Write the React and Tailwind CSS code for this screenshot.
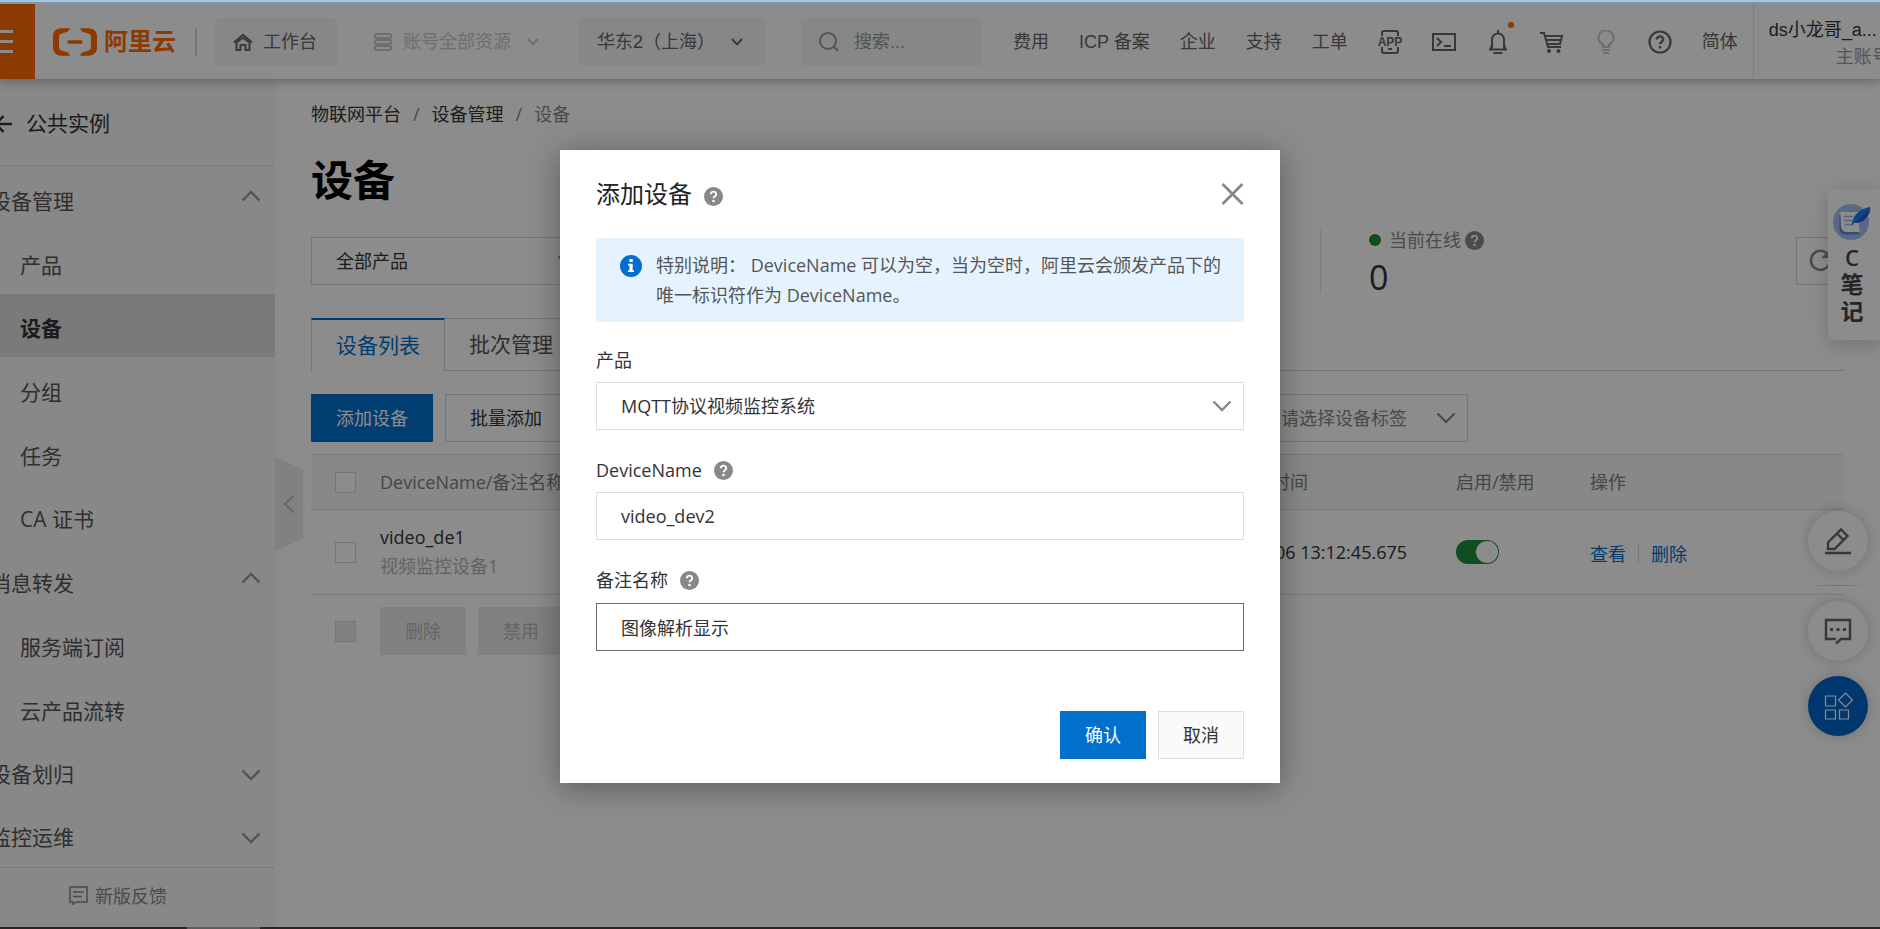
import { useState } from 'react'

const menu = [
    { label: '设备管理', group: true, open: true, size: 'h-16' },
    { label: '产品', size: 'h-16' },
    { label: '设备', active: true, size: 'h-[63px]' },
    { label: '分组', size: 'h-16' },
    { label: '任务', size: 'h-16' },
    { label: 'CA 证书', size: 'h-[63px]' },
    { label: '消息转发', group: true, open: true, size: 'h-16' },
    { label: '服务端订阅', size: 'h-16' },
    { label: '云产品流转', size: 'h-16' },
    { label: '设备划归', group: true, size: 'h-[63px]' },
    { label: '监控运维', group: true, size: 'h-[63px]' },
]

const navLinks = ['费用', 'ICP 备案', '企业', '支持', '工单']

const Chevron = ({ className = '', width = 2 }) => (
    <svg
        className={className}
        width="20"
        height="12"
        viewBox="0 0 20 12"
        fill="none"
        stroke="currentColor"
        strokeWidth={width}>
        <path d="M1.5 1.5 10 10l8.5-8.5" />
    </svg>
)

const SmallChevron = () => (
    <svg width="12" height="8" viewBox="0 0 12 8" fill="none" stroke="currentColor" strokeWidth="2">
        <path d="M1 1l5 5.4L11 1" />
    </svg>
)

const Help = () => (
    <svg width="19" height="19" viewBox="0 0 24 24" className="shrink-0">
        <circle cx="12" cy="12" r="12" fill="#888" />
        <path
            d="M8.6 9.2a3.4 3.4 0 0 1 6.8.2c0 2.2-3.4 2.4-3.4 4.9"
            fill="none"
            stroke="#fff"
            strokeWidth="2.4"
        />
        <circle cx="12" cy="17.8" r="1.6" fill="#fff" />
    </svg>
)

const Icon = ({ children, className = '' }) => (
    <svg
        width="24"
        height="24"
        viewBox="0 0 24 24"
        fill="none"
        stroke="currentColor"
        strokeWidth="2"
        className={className}>
        {children}
    </svg>
)

const Checkbox = ({ label, disabled }) => (
    <input
        type="checkbox"
        aria-label={label}
        disabled={disabled}
        className="block size-[21px] appearance-none border border-[#d5d5d5] bg-white disabled:bg-[#ebebeb]"
    />
)

function TopBar() {
    return (
        <header className="relative z-10 flex h-[75px] shrink-0 items-center bg-white font-['Liberation_Sans','Noto_Sans_CJK_SC',sans-serif] text-lg text-[#666] whitespace-nowrap shadow-[0_2px_10px_rgba(0,0,0,0.3)]">
            <button
                aria-label="菜单"
                className="flex h-full w-[35px] shrink-0 flex-col justify-center gap-[7px] bg-[#ff6a00]">
                <span className="h-[3px] w-[13px] bg-white" />
                <span className="h-[3px] w-[13px] bg-white" />
                <span className="h-[3px] w-[13px] bg-white" />
            </button>
            <a
                href="#home"
                className="ml-[18px] flex shrink-0 items-center gap-[7px] text-2xl font-bold text-[#ff6a00]">
                <svg width="44" height="28" viewBox="0 0 45 28" fill="currentColor">
                    <path d="M17.5 0H8.5C3.4 0 0 3.4 0 8v12c0 4.600 3.400 8 8.500 8h9l-2.100-3.300-6.900-2.100C7 22 6.200 20.900 6.200 19.600V8.400C6.200 7.100 7 6 8.500 5.500l6.900-2.200z" />
                    <path d="M27.500 0h9C41.600 0 45 3.400 45 8v12c0 4.600-3.400 8-8.500 8h-9l2.100-3.300 6.900-2.100c1.500-.6 2.300-1.700 2.300-3V8.400c0-1.300-.8-2.400-2.300-2.900l-6.900-2.200z" />
                    <path d="M15 12.200h15v3.600H15z" />
                </svg>
                阿里云
            </a>
            <span className="ml-[19px] h-7 w-0.5 shrink-0 bg-[#d8d8d8]" />
            <button className="ml-[18px] flex h-12 shrink-0 items-center gap-[10px] rounded-sm bg-[#f4f6f9] pr-5 pl-[18px]">
                <svg width="20" height="18" viewBox="0 0 20 18" fill="none" stroke="currentColor" strokeWidth="2">
                    <path d="M1 9.500 10 1.800l9 7.700" />
                    <path d="M3.500 9.500V17h4v-5h5v5h4V9.500L10 4.800z" />
                </svg>
                工作台
            </button>
            <button className="ml-[37px] flex shrink-0 items-center text-[#c6c9ce]">
                <svg width="18" height="18" viewBox="0 0 18 18" fill="none" stroke="currentColor" strokeWidth="2">
                    <rect x="1" y="1" width="16" height="4" rx="1.500" />
                    <rect x="1" y="7" width="16" height="4" rx="1.500" />
                    <rect x="1" y="13" width="16" height="4" rx="1.500" />
                </svg>
                <span className="mr-4 ml-[11px]">账号全部资源</span>
                <SmallChevron />
            </button>
            <button className="ml-10 flex h-12 w-[186px] shrink-0 items-center justify-between rounded-sm bg-[#f4f6f9] pr-[22px] pl-[18px]">
                华东2（上海）
                <SmallChevron />
            </button>
            <label className="ml-9 flex h-12 w-[180px] shrink-0 items-center gap-[15px] bg-[#f4f6f9] pl-[18px] text-[#999]">
                <svg width="20" height="20" viewBox="0 0 20 20" fill="none" stroke="currentColor" strokeWidth="2">
                    <circle cx="9" cy="9" r="8" />
                    <path d="m14 14 5 5" />
                </svg>
                <input
                    aria-label="搜索"
                    placeholder="搜索..."
                    className="w-24 bg-transparent outline-none placeholder:text-[#999]"
                />
            </label>
            <nav className="ml-8 flex shrink-0 items-center gap-[30px]">
                {navLinks.map(link => (
                    <a key={link} href="#nav">
                        {link}
                    </a>
                ))}
                <button aria-label="APP">
                    <svg width="24" height="24" viewBox="0 0 24 24" fill="none" stroke="currentColor" strokeWidth="2">
                        <path d="M4 6V3a2 2 0 0 1 2-2h12a2 2 0 0 1 2 2v3M4 17v4a2 2 0 0 0 2 2h12a2 2 0 0 0 2-2v-4M10 19h4" />
                        <text
                            x="12"
                            y="16"
                            textAnchor="middle"
                            fill="currentColor"
                            stroke="none"
                            fontSize="12"
                            fontWeight="700">
                            APP
                        </text>
                    </svg>
                </button>
                <button aria-label="终端">
                    <Icon>
                        <path d="M1 4h22v16H1zM5 8l4 4-4 4M12 16h7" />
                    </Icon>
                </button>
                <button aria-label="消息" className="relative">
                    <Icon>
                        <path d="M12 0v3M3 19.500h18M6 19V9.500a6 6 0 0 1 12 0V19M7.500 23h9M6 15l-1.500 4M18 15l1.500 4" />
                    </Icon>
                    <span className="absolute -top-2 -right-1 size-1.5 rounded-full bg-[#ff6a00]" />
                </button>
                <button aria-label="购物车">
                    <Icon>
                        <path d="M0 3h4l4 14h13M5 6h17l-2 8H7M6 10h15" />
                        <circle cx="9" cy="21" r="2" fill="currentColor" stroke="none" />
                        <circle cx="18.500" cy="21" r="2" fill="currentColor" stroke="none" />
                    </Icon>
                </button>
                <button aria-label="提示" className="text-[#c6c9ce]">
                    <Icon>
                        <path d="M9 17v-2.500a7.500 7.500 0 1 1 6 0V17zM8 20h8M9 23h6" />
                    </Icon>
                </button>
                <button aria-label="帮助">
                    <Icon>
                        <circle cx="12" cy="12" r="10.500" strokeWidth="2.200" />
                        <path d="M8.800 9.600a3.200 3.200 0 0 1 6.400 0c0 2-3.200 2.400-3.200 4.600M12 16v2.400" strokeWidth="2.400" />
                    </Icon>
                </button>
                <a href="#lang">简体</a>
            </nav>
            <div className="ml-[15px] flex h-full w-[137px] shrink-0 flex-col justify-center border-l border-[#e2e2e2] pt-1 pl-[15px] leading-[27px]">
                <span className="text-[#333]">ds小龙哥_a...</span>
                <span className="text-right text-[#999]">主账号</span>
            </div>
        </header>
    )
}

function Sidebar() {
    return (
        <aside className="relative flex w-[275px] shrink-0 flex-col bg-[#f7f7f7] text-[21px] text-[#555]">
            <button className="flex h-[87px] shrink-0 items-center gap-[14px] border-b border-[#dedede] pt-1 text-[#333]">
                <svg width="12" height="18" viewBox="0 0 12 18" fill="none" stroke="currentColor" strokeWidth="2.500">
                    <path d="M3.500 1-4 9l7.500 8M-4 9h16" />
                </svg>
                公共实例
            </button>
            <nav className="flex-1 overflow-hidden">
                {menu.map(item => (
                    <a
                        key={item.label}
                        href="#menu"
                        className={`flex items-center justify-between pr-[14px] ${item.size} ${
                            item.active ? 'bg-[#dedede] font-bold text-[#333]' : ''
                        }`}>
                        <span className={`pt-[7px] ${item.group ? '-ml-[10px]' : 'pl-5'}`}>
                            {item.label}
                        </span>
                        {item.group && (
                            <Chevron
                                width={2.4}
                                className={`text-[#999] ${item.open ? 'mb-1 rotate-180' : 'mt-1.5'}`}
                            />
                        )}
                    </a>
                ))}
            </nav>
            <button className="flex h-[60px] shrink-0 items-center gap-[7px] border-t border-[#dedede] pb-1 pl-[69px] text-lg text-[#888]">
                <svg width="19" height="19" viewBox="0 0 19 19" fill="none" stroke="currentColor" strokeWidth="1.500">
                    <path d="M1 1h17v15H7l-3 2.500V16H1zM4 6h11M4 10.500h9" />
                </svg>
                新版反馈
            </button>
            <button
                aria-label="收起"
                className="absolute top-[378px] left-full z-10 flex h-[94px] w-7 items-center justify-center bg-[#ebebeb] text-[#c0c0c0] [clip-path:polygon(0_0,100%_13%,100%_87%,0_100%)]">
                <Chevron width={2.4} className="rotate-90" />
            </button>
        </aside>
    )
}

function Devices() {
    return (
        <main className="min-w-0 flex-1 overflow-hidden bg-white px-9 pt-[23px] text-lg whitespace-nowrap text-[#333]">
            <nav className="flex h-6 items-center gap-3 text-[#888]">
                <a href="#iot" className="text-[#333]">
                    物联网平台
                </a>
                <span>/</span>
                <a href="#manage" className="text-[#333]">
                    设备管理
                </a>
                <span>/</span>
                <span>设备</span>
            </nav>
            <h1 className="mt-[26px] h-14 text-[42px] leading-[56px] font-bold text-black">设备</h1>
            <div className="mt-5 flex h-[65px] items-center">
                <div className="relative w-[278px]">
                    <select
                        aria-label="全部产品"
                        className="h-12 w-full appearance-none border border-[#d5d5d5] bg-white px-6">
                        <option>全部产品</option>
                    </select>
                    <Chevron className="pointer-events-none absolute top-[18px] right-3 text-[#888]" />
                </div>
                <div className="ml-auto flex h-full w-[524px] justify-between border-l border-[#e5e5e5] pl-12">
                    <div className="flex flex-col text-[#888]">
                        <span className="flex h-6 items-center">
                            <span className="mr-2 size-3 rounded-full bg-[#1e8e3e]" />
                            当前在线
                            <span className="ml-1">
                                <Help />
                            </span>
                        </span>
                        <span className="mt-1 text-[34px] leading-[42px] text-[#333]">0</span>
                    </div>
                    <button
                        aria-label="刷新"
                        className="flex size-12 items-center self-center border border-[#d5d5d5] pl-3 text-[#888]">
                        <svg width="23" height="23" viewBox="0 0 23 23" fill="none" stroke="currentColor" strokeWidth="2.500">
                            <path d="M20 15.500A9.500 9.500 0 1 1 18.500 5" />
                            <path d="M12 9h9V1z" fill="currentColor" stroke="none" />
                        </svg>
                    </button>
                </div>
            </div>
            <div className="mt-[25px] flex h-[53px] text-[21px]">
                <button className="h-full border-x border-t-2 border-x-[#d5d5d5] border-t-[#0070cc] px-6 text-[#0070cc]">
                    设备列表
                </button>
                <button className="h-full border border-l-0 border-[#d5d5d5] px-6 text-[#555]">
                    批次管理
                </button>
                <span className="flex-1 border-b border-[#d5d5d5]" />
            </div>
            <div className="mt-[23px] flex h-12 w-[1157px] max-w-full gap-3">
                <button className="bg-[#0070cc] px-[25px] text-white">添加设备</button>
                <button className="border border-[#d5d5d5] px-6">批量添加</button>
                <div className="relative ml-auto w-[212px]">
                    <select
                        aria-label="设备标签"
                        className="h-12 w-full appearance-none border border-[#d5d5d5] bg-white px-6 text-[#888]">
                        <option>请选择设备标签</option>
                    </select>
                    <Chevron className="pointer-events-none absolute top-[18px] right-3 text-[#888]" />
                </div>
            </div>
            <table className="mt-3 w-full table-fixed border-collapse text-left">
                <thead className="border-y border-[#e0e0e0] bg-[#f7f7f7] text-[#808080]">
                    <tr className="h-[55px]">
                        <th className="w-[69px] pl-6">
                            <Checkbox label="全选" />
                        </th>
                        <th className="font-normal">DeviceName/备注名称</th>
                        <th className="w-64 font-normal">最后上线时间</th>
                        <th className="w-[134px] font-normal">启用/禁用</th>
                        <th className="w-[254px] font-normal">操作</th>
                    </tr>
                </thead>
                <tbody>
                    <tr className="h-[85px] border-b border-[#e0e0e0]">
                        <td className="pl-6">
                            <Checkbox label="video_de1" />
                        </td>
                        <td className="leading-[29px]">
                            <div>video_de1</div>
                            <div className="text-[#b5b5b5]">视频监控设备1</div>
                        </td>
                        <td>2022/01/06 13:12:45.675</td>
                        <td>
                            <label className="flex h-6 w-[43px] items-center justify-end rounded-full bg-[#1e8e3e] pr-px">
                                <input
                                    type="checkbox"
                                    role="switch"
                                    aria-label="启用"
                                    defaultChecked
                                    className="size-[22px] appearance-none rounded-full bg-white"
                                />
                            </label>
                        </td>
                        <td>
                            <div className="flex items-center pt-1 text-[#0070cc]">
                                <a href="#view">查看</a>
                                <span className="mx-3 h-[18px] w-px bg-[#d5d5d5]" />
                                <a href="#delete">删除</a>
                            </div>
                        </td>
                    </tr>
                </tbody>
            </table>
            <div className="mt-3 flex items-center pl-6 text-[#b8b8b8]">
                <Checkbox label="批量选择" disabled />
                <button disabled className="ml-6 h-12 bg-[#ebebeb] px-[25px]">
                    删除
                </button>
                <button disabled className="ml-3 h-12 bg-[#ebebeb] px-[25px]">
                    禁用
                </button>
            </div>
        </main>
    )
}

function FloatingTools() {
    const round =
        'flex size-[60px] items-center justify-center rounded-full bg-white text-[#666] shadow-[0_0_14px_rgba(0,0,0,0.2)]'
    return (
        <>
            <button className="absolute top-[185px] right-0 flex h-[151px] w-[52px] flex-col items-center rounded-l-lg bg-white pt-[15px] pr-1 text-[23px] leading-[27px] font-bold text-[#444] shadow-[0_4px_20px_rgba(0,0,0,0.2)]">
                <svg width="38" height="36" viewBox="0 0 38 36" className="shrink-0">
                    <circle cx="18" cy="18" r="18" fill="#a5bdf5" />
                    <path d="M8 11v14q0 4 5 4h13" fill="none" stroke="#6484d0" strokeWidth="3" />
                    <path d="M6 8h20v15q0 5 2 5H14q-5 0-6-5L7.500 11Q7.500 9 6 8z" fill="#fff" />
                    <path d="M11 12.500h9M11 16.500h8M12 20.500h8" stroke="#9db6ef" strokeWidth="1.300" />
                    <path d="M19 22c-1-8 6-17 18-19 1 5-1 13-16 16z" fill="#1f7df0" />
                    <path d="M21 19c6-4 10-7 15-13-1 8-7 14-15 13z" fill="#3a4be0" />
                </svg>
                <span className="mt-1 text-[22px] leading-[27px] font-semibold">C</span>
                <span>笔</span>
                <span>记</span>
            </button>
            <div className="absolute top-[507px] right-3 flex flex-col items-center">
                <button aria-label="编辑" className={round}>
                    <svg width="28" height="28" viewBox="0 0 28 28" fill="none" stroke="currentColor" strokeWidth="2.400">
                        <path d="M4 22v-6.500L17 2.500l6.500 6.500-13 13zM13 6.500l6.500 6.500M1 26h26" />
                    </svg>
                </button>
                <span className="mt-3.5 h-px w-[60px] bg-linear-to-r from-transparent via-[#c4c4c4] to-transparent" />
                <button aria-label="反馈" className={`mt-[15px] ${round}`}>
                    <svg width="28" height="28" viewBox="0 0 28 28" fill="none" stroke="currentColor" strokeWidth="2.400">
                        <path d="M12 22H2V3h24v19h-9l-5 4.500" />
                        <path d="M6 12.500h3M12.500 12.500h3M19 12.500h3" strokeWidth="3" />
                    </svg>
                </button>
                <button
                    aria-label="应用"
                    className="mt-[15px] flex size-[60px] items-center justify-center rounded-full bg-[#0064c8] text-white shadow-[0_0_14px_rgba(0,0,0,0.2)]">
                    <svg width="29" height="29" viewBox="0 0 29 29" fill="none" stroke="currentColor" strokeWidth="1.200">
                        <path d="M1.500 4h10v10h-10zM1.500 18h10v9h-10zM15.500 18h9v9h-9zM21.500 1l7 7-7 7-7-7z" />
                    </svg>
                </button>
            </div>
        </>
    )
}

function AddDeviceDialog() {
    const [name, setName] = useState('video_dev2')
    const [remark, setRemark] = useState('图像解析显示')

    return (
        <div className="absolute inset-0 z-30 flex items-start justify-center bg-black/45 pt-[146px] pr-10">
            <div
                role="dialog"
                aria-labelledby="dialog-title"
                className="w-[720px] bg-white px-9 pt-7 pb-6 text-lg text-[#333] shadow-[0_4px_30px_rgba(0,0,0,0.35)]">
                <div className="flex h-8 items-center">
                    <h2 id="dialog-title" className="mr-3 text-2xl text-[#222]">
                        添加设备
                    </h2>
                    <span className="pt-1">
                        <Help />
                    </span>
                    <button aria-label="关闭" className="ml-auto">
                        <svg width="23" height="22" viewBox="0 0 23 22" fill="none" stroke="#888" strokeWidth="2.800">
                            <path d="m1.500 1 20 20M21.500 1l-20 20" />
                        </svg>
                    </button>
                </div>
                <div className="mt-7 flex bg-[#e5f3ff] py-3 pr-2 pl-6 text-[#555]">
                    <svg width="22" height="22" viewBox="0 0 22 22" className="mt-[5px] mr-[14px] shrink-0">
                        <circle cx="11" cy="11" r="11" fill="#0070cc" />
                        <path d="M9.500 4h3.200v3H9.500zM8 8.800h4.700v6.400H14v1.800H8v-1.800h1.500v-4.600H8z" fill="#fff" />
                    </svg>
                    <p className="leading-[30px]">
                        特别说明： DeviceName 可以为空，当为空时，阿里云会颁发产品下的
                        <br />
                        唯一标识符作为 DeviceName。
                    </p>
                </div>
                <label htmlFor="product" className="mt-[26px] block h-6 leading-6">
                    产品
                </label>
                <div className="relative mt-2.5">
                    <select
                        id="product"
                        className="h-12 w-full appearance-none border border-[#dedede] bg-white px-6">
                        <option>MQTT协议视频监控系统</option>
                    </select>
                    <Chevron
                        width={2.4}
                        className="pointer-events-none absolute top-[18px] right-3 text-[#888]"
                    />
                </div>
                <div className="mt-7 flex h-6 items-center gap-3">
                    <label htmlFor="device-name">DeviceName</label>
                    <Help />
                </div>
                <input
                    id="device-name"
                    value={name}
                    onChange={e => setName(e.target.value)}
                    className="mt-2.5 block h-12 w-full border border-[#dedede] px-6 outline-none"
                />
                <div className="mt-7 flex h-6 items-center gap-3">
                    <label htmlFor="remark">备注名称</label>
                    <Help />
                </div>
                <input
                    id="remark"
                    value={remark}
                    onChange={e => setRemark(e.target.value)}
                    className="mt-[11px] block h-12 w-full border border-[#6b6b6b] px-6 outline-none"
                />
                <div className="mt-[60px] flex justify-end gap-3">
                    <button className="h-12 bg-[#0070cc] px-[25px] text-white">确认</button>
                    <button className="h-12 border border-[#dedede] bg-[#fafafa] px-6">取消</button>
                </div>
            </div>
        </div>
    )
}

export default function App() {
    return (
        <div className="flex h-screen flex-col overflow-hidden bg-white font-['Open_Sans','Noto_Sans_CJK_SC',sans-serif]">
            <div className="h-1 shrink-0 border-b-2 border-[#7d97a8] bg-[#a3c5dd]" />
            <div className="relative flex min-h-0 flex-1 flex-col overflow-hidden">
                <TopBar />
                <div className="flex min-h-0 flex-1">
                    <Sidebar />
                    <Devices />
                </div>
                <FloatingTools />
                <AddDeviceDialog />
            </div>
            <div className="h-0.5 shrink-0 bg-[#2a2627] pl-[187px]">
                <div className="h-full w-[73px] bg-[#5f5c5d]" />
            </div>
        </div>
    )
}
